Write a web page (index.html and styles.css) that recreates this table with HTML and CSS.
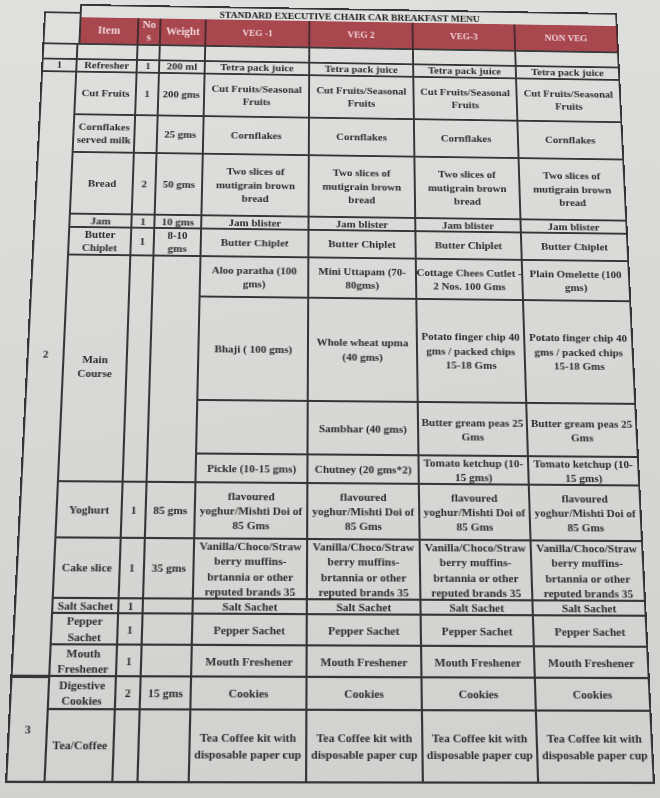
FILE: index.html
```html
<!DOCTYPE html>
<html lang="en">
<head>
<meta charset="utf-8">
<title>Standard Executive Chair Car Breakfast Menu</title>
<link rel="stylesheet" href="styles.css">
</head>
<body>
<div class="menu">
  <div class="c sn sn-top"></div>
  <div class="c title">STANDARD EXECUTIVE CHAIR CAR BREAKFAST MENU</div>

  <div class="c hd hd-lg hd-first">Item</div>
  <div class="c hd hd-lg hd-nos">No<br>s</div>
  <div class="c hd hd-lg">Weight</div>
  <div class="c hd">VEG -1</div>
  <div class="c hd">VEG 2</div>
  <div class="c hd">VEG-3</div>
  <div class="c hd">NON VEG</div>

  <div class="c sn"></div>
  <div class="c"></div><div class="c"></div><div class="c"></div><div class="c"></div><div class="c"></div><div class="c"></div><div class="c"></div>

  <div class="c sn">1</div>
  <div class="c">Refresher</div><div class="c">1</div><div class="c">200 ml</div>
  <div class="c">Tetra pack juice</div><div class="c">Tetra pack juice</div><div class="c">Tetra pack juice</div><div class="c">Tetra pack juice</div>

  <div class="c sn span14 sn-two">2</div>
  <div class="c">Cut Fruits</div><div class="c">1</div><div class="c">200 gms</div>
  <div class="c">Cut Fruits/Seasonal<br>Fruits</div><div class="c">Cut Fruits/Seasonal<br>Fruits</div><div class="c">Cut Fruits/Seasonal<br>Fruits</div><div class="c">Cut Fruits/Seasonal<br>Fruits</div>

  <div class="c">Cornflakes<br>served milk</div><div class="c"></div><div class="c">25 gms</div>
  <div class="c">Cornflakes</div><div class="c">Cornflakes</div><div class="c">Cornflakes</div><div class="c">Cornflakes</div>

  <div class="c">Bread</div><div class="c">2</div><div class="c">50 gms</div>
  <div class="c">Two slices of<br>mutigrain brown<br>bread</div><div class="c">Two slices of<br>mutigrain brown<br>bread</div><div class="c">Two slices of<br>mutigrain brown<br>bread</div><div class="c">Two slices of<br>mutigrain brown<br>bread</div>

  <div class="c">Jam</div><div class="c">1</div><div class="c">10 gms</div>
  <div class="c">Jam blister</div><div class="c">Jam blister</div><div class="c">Jam blister</div><div class="c">Jam blister</div>

  <div class="c">Butter<br>Chiplet</div><div class="c">1</div><div class="c">8-10<br>gms</div>
  <div class="c">Butter Chiplet</div><div class="c">Butter Chiplet</div><div class="c">Butter Chiplet</div><div class="c">Butter Chiplet</div>

  <div class="c span4">Main<br>Course</div><div class="c span4"></div><div class="c span4"></div>
  <div class="c">Aloo paratha (100<br>gms)</div><div class="c">Mini Uttapam (70-<br>80gms)</div><div class="c">Cottage Chees Cutlet -<br>2 Nos. 100 Gms</div><div class="c">Plain Omelette (100<br>gms)</div>
  <div class="c">Bhaji ( 100 gms)</div><div class="c">Whole wheat upma<br>(40 gms)</div><div class="c">Potato finger chip 40<br>gms / packed chips<br>15-18 Gms</div><div class="c">Potato finger chip 40<br>gms / packed chips<br>15-18 Gms</div>
  <div class="c"></div><div class="c">Sambhar (40 gms)</div><div class="c">Butter gream peas 25<br>Gms</div><div class="c">Butter gream peas 25<br>Gms</div>
  <div class="c">Pickle (10-15 gms)</div><div class="c">Chutney (20 gms*2)</div><div class="c">Tomato ketchup (10-<br>15 gms)</div><div class="c">Tomato ketchup (10-<br>15 gms)</div>

  <div class="c">Yoghurt</div><div class="c">1</div><div class="c">85 gms</div>
  <div class="c">flavoured<br>yoghur/Mishti Doi of<br>85 Gms</div><div class="c">flavoured<br>yoghur/Mishti Doi of<br>85 Gms</div><div class="c">flavoured<br>yoghur/Mishti Doi of<br>85 Gms</div><div class="c">flavoured<br>yoghur/Mishti Doi of<br>85 Gms</div>

  <div class="c">Cake slice</div><div class="c">1</div><div class="c">35 gms</div>
  <div class="c">Vanilla/Choco/Straw<br>berry muffins-<br>brtannia or other<br>reputed brands 35</div><div class="c">Vanilla/Choco/Straw<br>berry muffins-<br>brtannia or other<br>reputed brands 35</div><div class="c">Vanilla/Choco/Straw<br>berry muffins-<br>brtannia or other<br>reputed brands 35</div><div class="c">Vanilla/Choco/Straw<br>berry muffins-<br>brtannia or other<br>reputed brands 35</div>

  <div class="c">Salt Sachet</div><div class="c">1</div><div class="c"></div>
  <div class="c">Salt Sachet</div><div class="c">Salt Sachet</div><div class="c">Salt Sachet</div><div class="c">Salt Sachet</div>

  <div class="c">Pepper<br>Sachet</div><div class="c">1</div><div class="c"></div>
  <div class="c">Pepper Sachet</div><div class="c">Pepper Sachet</div><div class="c">Pepper Sachet</div><div class="c">Pepper Sachet</div>

  <div class="c">Mouth<br>Freshener</div><div class="c">1</div><div class="c"></div>
  <div class="c">Mouth Freshener</div><div class="c">Mouth Freshener</div><div class="c">Mouth Freshener</div><div class="c">Mouth Freshener</div>

  <div class="c sn span2 sn-three">3</div>
  <div class="c">Digestive<br>Cookies</div><div class="c">2</div><div class="c">15 gms</div>
  <div class="c">Cookies</div><div class="c">Cookies</div><div class="c">Cookies</div><div class="c">Cookies</div>

  <div class="c">Tea/Coffee</div><div class="c"></div><div class="c"></div>
  <div class="c">Tea Coffee kit with<br>disposable paper cup</div><div class="c">Tea Coffee kit with<br>disposable paper cup</div><div class="c">Tea Coffee kit with<br>disposable paper cup</div><div class="c">Tea Coffee kit with<br>disposable paper cup</div>
</div>
</body>
</html>
```

FILE: styles.css
```css
html, body {
  margin: 0;
  padding: 0;
  width: 660px;
  height: 798px;
  overflow: hidden;
}

body {
  background: linear-gradient(172deg, #e0e0de 0%, #d8d8d6 45%, #d0d0ce 100%);
}

.menu {
  display: grid;
  width: 600px;
  height: 780px;
  grid-template-columns: 37px 62px 23px 47px 108px 108px 107px 108px;
  grid-template-rows: 15px 31px 16.5px 14px 47px 41.5px 65.5px 14.3px 29px 42.2px 105.3px 53px 27.9px 53.5px 57.8px 13.6px 29.2px 29px 29.6px 65.4px;
  transform-origin: 0 0;
  transform: matrix3d(0.965797, 0.016245, 0, 0.00001885, -0.051410, 0.879135, 0, -0.00015371, 0, 0, 1, 0, 44.5, 3.4, 0, 1);
  font-family: "Liberation Serif", "Times New Roman", serif;
}

.c {
  display: flex;
  align-items: center;
  justify-content: center;
  text-align: center;
  white-space: nowrap;
  box-sizing: border-box;
  min-width: 0;
  min-height: 0;
  border-right: 2px solid #353535;
  border-bottom: 2px solid #353535;
  font-size: 11px;
  font-weight: bold;
  line-height: 14.2px;
  color: #2c2c2c;
}

.sn {
  border-left: 2px solid #353535;
}

.sn-top {
  grid-row: span 2;
  margin-top: 9px;
  border-top: 2px solid #353535;
  border-right: none;
}

.sn-two {
  padding-bottom: 9px;
}

.sn-three {
  border-top: 1px solid #353535;
}

.title {
  grid-column: span 7;
  border-top: 2px solid #353535;
  border-left: 2px solid #353535;
  border-bottom: none;
  align-items: flex-end;
  font-size: 10px;
  line-height: 10px;
  color: #1c1c1c;
  padding-bottom: 0;
}

.hd {
  background: #a9474f;
  color: #f1d3d6;
  font-size: 9.7px;
  line-height: 13px;
  border-right-color: #4a2a2d;
  border-bottom-color: #3a3a3a;
}

.hd-lg {
  font-size: 11.5px;
}

.hd-first {
  border-left: 2px solid #353535;
}

.hd-nos {
  line-height: 13.5px;
}

.span4 {
  grid-row: span 4;
}

.span14 {
  grid-row: span 14;
}

.span2 {
  grid-row: span 2;
}
```
